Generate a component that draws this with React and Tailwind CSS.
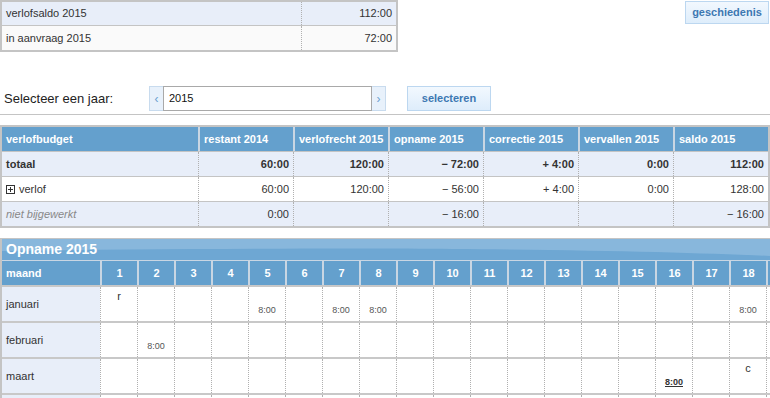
import React from 'react';

const budgetCols = ['restant 2014', 'verlofrecht 2015', 'opname 2015', 'correctie 2015', 'vervallen 2015', 'saldo 2015'];

const budgetRows = [
  { label: 'totaal', values: ['60:00', '120:00', '\u2212 72:00', '+ 4:00', '0:00', '112:00'], kind: 'total' },
  { label: 'verlof', values: ['60:00', '120:00', '\u2212 56:00', '+ 4:00', '0:00', '128:00'], kind: 'item' },
  { label: 'niet bijgewerkt', values: ['0:00', '', '\u2212 16:00', '', '', '\u2212 16:00'], kind: 'muted' },
];

const days = Array.from({ length: 31 }, (_, i) => i + 1);

// opname per maand: top = code, bot = uren
const months = [
  { name: 'januari', cells: { 1: { top: 'r' }, 5: { bot: '8:00' }, 7: { bot: '8:00' }, 8: { bot: '8:00' }, 18: { bot: '8:00' } } },
  { name: 'februari', cells: { 2: { bot: '8:00' } } },
  { name: 'maart', cells: { 16: { bot: '8:00', strong: true }, 18: { top: 'c' } } },
  { name: 'april', cells: {} },
];

const PlusBox = () => (
  <svg width="9" height="9" viewBox="0 0 9 9" className="mr-[4px] flex-none">
    <rect x="0.5" y="0.5" width="8" height="8" fill="#fff" stroke="#333" />
    <path d="M2 4.5h5M4.5 2v5" stroke="#333" strokeWidth="1" />
  </svg>
);

const App = () => {
  return (
    <div className="w-[770px] h-[398px] overflow-hidden bg-white text-[11px] text-[#333]" style={{ fontFamily: '"Liberation Sans", Arial, sans-serif' }}>
      {/* saldo overzicht */}
      <div className="flex items-start justify-between">
        <div className="w-[398px] border-2 border-[#c4c4c4]">
          <div className="flex h-[24px] bg-[#e8eef9] border-b border-[#c4c4c4]">
            <div className="w-[299px] flex items-center pl-[4px]">verlofsaldo 2015</div>
            <div className="flex-1 flex items-center justify-end pr-[4px] border-l border-dotted border-[#b0b0b0]">112:00</div>
          </div>
          <div className="flex h-[24px] bg-[#fafafa]">
            <div className="w-[299px] flex items-center pl-[4px]">in aanvraag 2015</div>
            <div className="flex-1 flex items-center justify-end pr-[4px] border-l border-dotted border-[#b0b0b0]">72:00</div>
          </div>
        </div>
        <button className="mt-[1px] mr-[1px] w-[84px] h-[23px] border border-[#bcd7f0] bg-gradient-to-b from-[#f2f8fe] to-[#deedfb] text-[11px] font-bold text-[#3d78b2]">
          geschiedenis
        </button>
      </div>

      {/* jaar selectie */}
      <div className="flex items-center mt-[34px] h-[25px]">
        <div className="w-[149px] pl-[4px] text-[13px] text-[#222]">Selecteer een jaar:</div>
        <div className="flex h-[25px] w-[237px]">
          <div className="w-[14px] flex items-center justify-center bg-[#e8f1fb] border border-r-0 border-[#c8dbee] text-[#6a9fd0] text-[12px]">&lsaquo;</div>
          <div className="flex-1 flex items-center pl-[5px] border border-[#a9a9a9] text-[#111]">2015</div>
          <div className="w-[14px] flex items-center justify-center bg-[#e8f1fb] border border-l-0 border-[#c8dbee] text-[#6a9fd0] text-[12px]">&rsaquo;</div>
        </div>
        <button className="ml-[21px] w-[84px] h-[25px] border border-[#bcd7f0] bg-gradient-to-b from-[#f2f8fe] to-[#deedfb] text-[11px] font-bold text-[#3d78b2]">
          selecteren
        </button>
      </div>
      <div className="mt-[3px] border-t border-[#c4c4c4]" />

      {/* verlofbudget */}
      <div className="mt-[10px] border-2 border-[#c4c4c4]">
        <div className="flex h-[24px] bg-[#64a0cd] text-white font-bold">
          <div className="w-[196px] flex items-center pl-[4px]">verlofbudget</div>
          {budgetCols.map(c => (
            <div key={c} className="w-[95px] flex items-center pl-[4px] border-l-2 border-[#c9d6e3]">{c}</div>
          ))}
        </div>
        {budgetRows.map(r => (
          <div
            key={r.label}
            className={`flex h-[25px] border-t border-[#c4c4c4] ${r.kind === 'item' ? 'bg-white' : 'bg-[#e8eef9]'} ${r.kind === 'total' ? 'font-bold' : ''}`}
          >
            <div className={`w-[196px] flex items-center pl-[4px] ${r.kind === 'muted' ? 'italic text-[#888]' : ''}`}>
              {r.kind === 'item' && <PlusBox />}
              {r.label}
            </div>
            {r.values.map((v, i) => (
              <div key={i} className="w-[95px] flex items-center justify-end pr-[4px] border-l border-dotted border-[#b0b0b0]">{v}</div>
            ))}
          </div>
        ))}
      </div>

      {/* opname kalender */}
      <div className="mt-[10px] border-t border-l-2 border-[#c4c4c4]">
        <div className="relative h-[21px] bg-[#88b7dc] overflow-hidden">
          <svg className="absolute inset-0" width="770" height="21" viewBox="0 0 770 21" preserveAspectRatio="none">
            <path d="M0 12 C150 10 350 9 450 10 C600 11 700 14 770 17 L770 21 L0 21 Z" fill="#6ea7d3" />
          </svg>
          <div className="relative pl-[4px] leading-[21px] text-[14px] font-bold text-white">Opname 2015</div>
        </div>
        <div className="flex h-[25px] border-t border-[#c9d6e3] bg-[#64a0cd] text-white font-bold">
          <div className="w-[98px] flex-none flex items-center pl-[4px]">maand</div>
          {days.map(d => (
            <div key={d} className="w-[37px] flex-none flex items-center justify-center border-l-2 border-[#c9d6e3]">{d}</div>
          ))}
        </div>
        {months.map(m => (
          <div key={m.name} className="flex h-[36px] border-t-2 border-[#c8c8c8]">
            <div className="w-[98px] flex-none flex items-center pl-[4px] bg-[#e8eef9]">{m.name}</div>
            {days.map(d => {
              const c = m.cells[d];
              return (
                <div key={d} className="w-[37px] flex-none flex flex-col items-center pt-[3px] border-l border-dotted border-[#b0b0b0]">
                  <div className="h-[13px] leading-[13px] text-[11px] text-[#333]">{c && c.top}</div>
                  <div className={`mt-[2px] h-[11px] leading-[11px] text-[9px] ${c && c.strong ? 'font-bold underline text-[#333]' : 'text-[#555]'}`}>
                    {c && c.bot}
                  </div>
                </div>
              );
            })}
          </div>
        ))}
      </div>
    </div>
  );
};

export default App;
